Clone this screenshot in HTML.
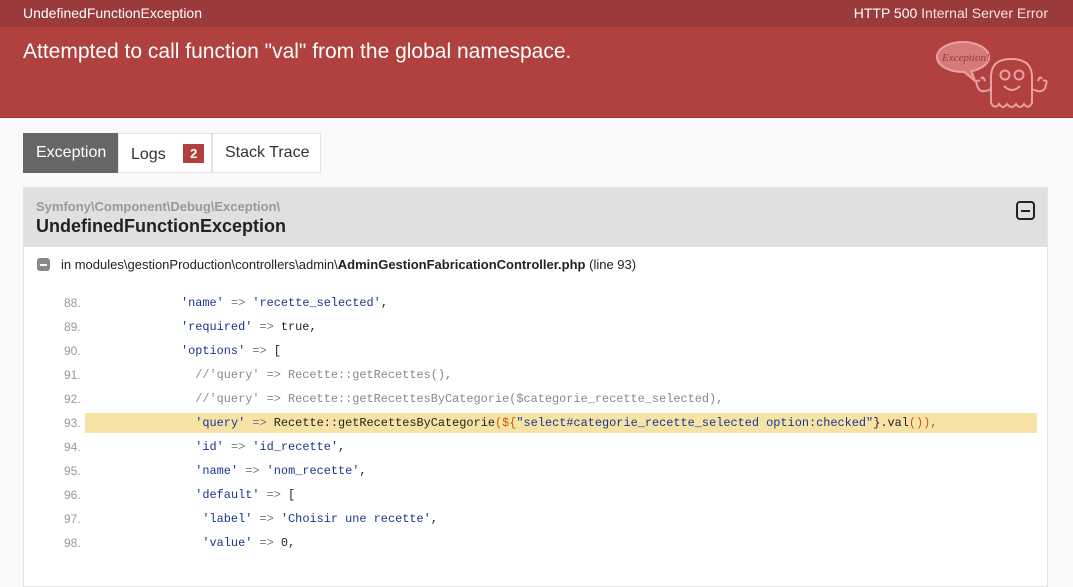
<!DOCTYPE html>
<html><head><meta charset="utf-8"><style>
*{margin:0;padding:0;box-sizing:border-box}
body{width:1073px;height:567px;overflow:hidden;background:#f9f9f9;font-family:"Liberation Sans",Arial,sans-serif;color:#222}
.top{height:27px;background:#9b3a3a;color:#f5e1e1;font-size:14px;position:relative}
.top .l{position:absolute;left:23px;top:5px;color:#fff}
.top .r{position:absolute;right:25px;top:5px}
.top .r b{font-weight:normal;color:#fff}
.hd{height:91px;background:#b0413e;position:relative;border-bottom:1px solid #a03a38}
.hd h1{position:absolute;left:23px;top:13px;font-size:21px;font-weight:normal;color:#fff}
.ghost{position:absolute;left:935px;top:12px}
.tabs{position:absolute;left:23px;top:133px;display:flex}
.tab{height:40px;border:1px solid #e4e4e4;background:#fff;font-size:16px;padding:10px 0 0 12px;color:#333}
.tab.a{background:#666;color:#fff;border-color:#666}
.badge{display:inline-block;background:#b0413e;color:#fff;font-weight:bold;font-size:13px;padding:2px 7px;margin-left:13px;vertical-align:1px}
.panel{position:absolute;left:23px;top:187px;width:1025px;height:400px;background:#fff;border:1px solid #e4e4e4}
.ph{height:59px;background:#e0e0e0;position:relative}
.ph .ns{position:absolute;left:12px;top:11px;font-size:13px;font-weight:bold;color:#999}
.ph .cl{position:absolute;left:12px;top:28px;font-size:18px;font-weight:bold;color:#222}
.tog{position:absolute;left:992px;top:13px;width:19px;height:19px;border:2px solid #222;border-radius:4px}
.tog:after{content:"";position:absolute;left:3px;top:6.5px;width:9px;height:2px;background:#222}
.file{position:absolute;left:13px;top:69px;font-size:13px;color:#222}
.file i{display:inline-block;width:13px;height:13px;background:#888;border-radius:3px;vertical-align:-2px;margin-right:11px;position:relative}
.file i:after{content:"";position:absolute;left:3px;top:5.5px;width:7px;height:2px;background:#fff}
.code{position:absolute;left:0;top:103px;width:100%}
.ln{height:24px;position:relative;font-family:"Liberation Mono",monospace;font-size:11.9px;line-height:24px;white-space:pre;color:#222}
.ln .n{position:absolute;left:40px;font-family:"Liberation Sans",sans-serif;font-size:12px;color:#999}
.ln .c{position:absolute;left:0}
.ln.hl .bg{position:absolute;left:61px;width:952px;top:2px;height:20px;background:#f7e3a5}
.s{color:#183691}.k{color:#777}.cm{color:#888}.o{color:#c55a11}
</style></head><body>
<div class="top"><span class="l">UndefinedFunctionException</span><span class="r"><b>HTTP 500</b> Internal Server Error</span></div>
<div class="hd"><h1>Attempted to call function "val" from the global namespace.</h1>
<svg class="ghost" width="115" height="72" viewBox="0 0 115 72" fill="none" stroke="#e8a0a0" stroke-width="2">
<ellipse cx="28" cy="18" rx="26" ry="15" fill="#d47a78" stroke="#e8a0a0"/>
<path d="M28 32 L40 42 L36 31" fill="#d47a78"/>
<text x="7" y="22" font-family="Liberation Serif,serif" font-style="italic" font-size="11" fill="#9b3a3a" stroke="none">Exception!</text>
<path d="M56 64 L56 38 Q56 20 76 20 Q97 20 97 38 L97 64 Q93 71 89 65 Q85 71 81 65 Q77 71 72 65 Q68 71 64 65 Q60 71 56 64Z"/>
<circle cx="70" cy="36" r="4.5"/><circle cx="84" cy="36" r="4.5"/>
<path d="M69 47 Q77 55 85 47"/>
<path d="M56 50 Q44 56 42 46 Q40 40 45 42 M46 40 Q48 36 50 42 M97 50 Q109 56 111 46 Q113 40 108 42 M107 40 Q105 36 103 42"/>
</svg></div>
<div class="tabs"><div class="tab a" style="width:95px">Exception</div><div class="tab" style="width:94px">Logs <span class="badge">2</span></div><div class="tab" style="width:109px">Stack Trace</div></div>
<div class="panel">
<div class="ph"><div class="ns">Symfony\Component\Debug\Exception\</div><div class="cl">UndefinedFunctionException</div><div class="tog"></div></div>
<div class="file"><i></i>in modules\gestionProduction\controllers\admin\<b>AdminGestionFabricationController.php</b> (line 93)</div>
<div class="code">
<div class="ln"><span class="n">88.</span><span class="c">                      <span class="s">'name'</span> <span class="k">=&gt;</span> <span class="s">'recette_selected'</span>,</span></div>
<div class="ln"><span class="n">89.</span><span class="c">                      <span class="s">'required'</span> <span class="k">=&gt;</span> true,</span></div>
<div class="ln"><span class="n">90.</span><span class="c">                      <span class="s">'options'</span> <span class="k">=&gt;</span> [</span></div>
<div class="ln"><span class="n">91.</span><span class="c cm">                        //'query' =&gt; Recette::getRecettes(),</span></div>
<div class="ln"><span class="n">92.</span><span class="c cm">                        //'query' =&gt; Recette::getRecettesByCategorie($categorie_recette_selected),</span></div>
<div class="ln hl"><span class="bg"></span><span class="n">93.</span><span class="c">                        <span class="s">'query'</span> <span class="k">=&gt;</span> Recette::getRecettesByCategorie<span class="o">(${</span><span class="s">"select#categorie_recette_selected option:checked"</span>}.val<span class="o">()),</span></span></div>
<div class="ln"><span class="n">94.</span><span class="c">                        <span class="s">'id'</span> <span class="k">=&gt;</span> <span class="s">'id_recette'</span>,</span></div>
<div class="ln"><span class="n">95.</span><span class="c">                        <span class="s">'name'</span> <span class="k">=&gt;</span> <span class="s">'nom_recette'</span>,</span></div>
<div class="ln"><span class="n">96.</span><span class="c">                        <span class="s">'default'</span> <span class="k">=&gt;</span> [</span></div>
<div class="ln"><span class="n">97.</span><span class="c">                         <span class="s">'label'</span> <span class="k">=&gt;</span> <span class="s">'Choisir une recette'</span>,</span></div>
<div class="ln"><span class="n">98.</span><span class="c">                         <span class="s">'value'</span> <span class="k">=&gt;</span> 0,</span></div>
</div></div>
</body></html>
